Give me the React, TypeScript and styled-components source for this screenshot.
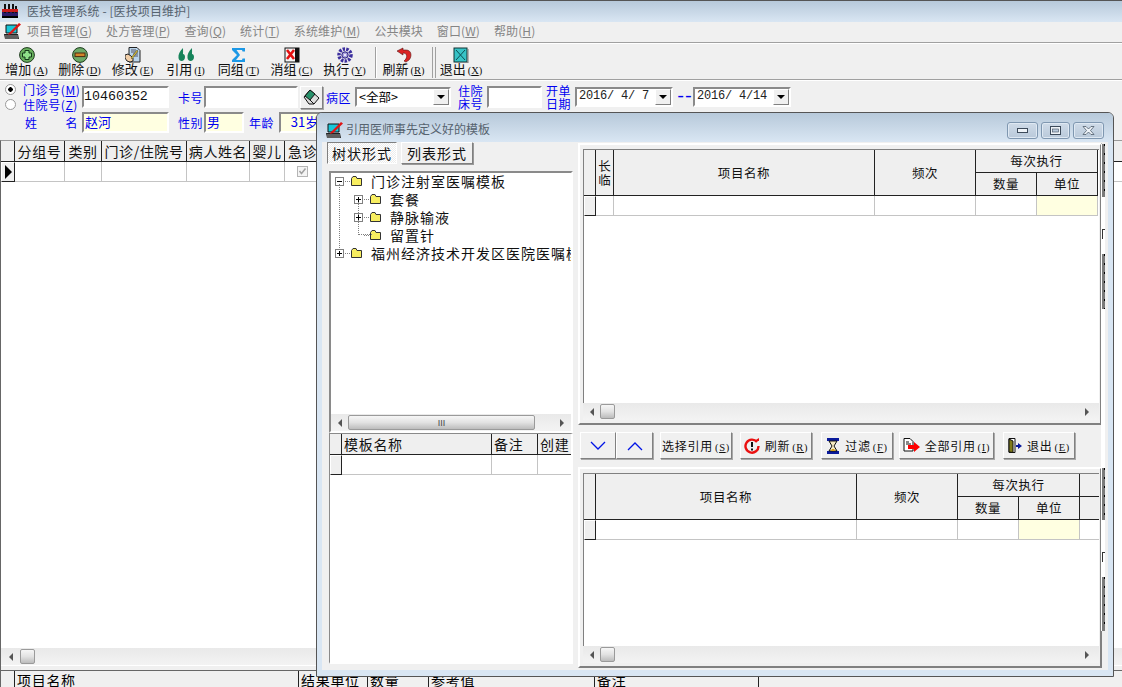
import React from "react";
import styled, { createGlobalStyle, css } from "styled-components";

const CJK = `"Noto Sans CJK SC", "Liberation Sans", sans-serif`;

const Global = createGlobalStyle`
  html, body { margin: 0; padding: 0; background: #f0f0f0; overflow: hidden; }
  * { box-sizing: border-box; }
  svg { flex: none; }
`;

const raised = css`
  border: 1px solid;
  border-color: #fff #808080 #808080 #fff;
  box-shadow: 1px 1px 0 #a8a8a8;
`;
const sunken = css`
  border: 2px solid;
  border-color: #8a8a8a #fff #fff #8a8a8a;
`;

const Page = styled.div`
  position: relative;
  width: 1122px;
  height: 687px;
  overflow: hidden;
  background: #f0f0f0;
  display: flex;
  flex-direction: column;
  font-family: ${CJK};
  color: #000;
`;

const TitleBar = styled.div`
  height: 22px;
  border-top: 1px solid #555;
  background: linear-gradient(#b7c9da, #d9e6f3);
  display: flex;
  align-items: center;
  gap: 9px;
  padding: 0 0 2px 2px;
  font-size: 12px;
  letter-spacing: 0.1px;
  color: #56636f;
`;

const MenuBar = styled.div`
  height: 21px;
  background: #f0f0f0;
  border-bottom: 1px solid #a0a0a0;
  display: flex;
  align-items: center;
  padding: 0 0 3px 4px;
`;
const MenuIconWrap = styled.div`
  width: 23px;
  display: flex;
`;
const MenuList = styled.div`
  display: flex;
  gap: 14px;
`;
const MenuItem = styled.span`
  font-size: 12px;
  color: #858585;
  white-space: nowrap;
  letter-spacing: 0.1px;
  u { text-decoration: underline; }
`;

const Toolbar = styled.div`
  height: 37px;
  border-top: 1px solid #fff;
  border-bottom: 1px solid #a0a0a0;
  box-shadow: 0 1px 0 #fff;
  display: flex;
  align-items: flex-start;
  padding-top: 3px;
`;
const ToolButton = styled.div<{ $w?: number }>`
  width: ${(p) => p.$w ?? 53}px;
  display: flex;
  flex-direction: column;
  align-items: center;
  height: 32px;
  white-space: nowrap;
`;
const ToolLabel = styled.span`
  font-size: 13px;
  line-height: 14px;
  margin-top: -1px;
  color: #111;
`;
const Accel = styled.span`
  font-family: "Liberation Serif", serif;
  font-size: 10.5px;
  margin-left: 2px;
  u { text-decoration: underline; }
`;
const ToolSep = styled.div<{ $double?: boolean; $ml: number }>`
  width: ${(p) => (p.$double ? 4 : 2)}px;
  height: 31px;
  margin-left: ${(p) => p.$ml}px;
  border-left: 1px solid #a0a0a0;
  border-right: 1px solid ${(p) => (p.$double ? "#a0a0a0" : "#fff")};
`;

const Form = styled.div`
  height: 60px;
  display: flex;
  flex-direction: column;
  padding-top: 2px;
`;
const FormRow = styled.div<{ $h: number }>`
  height: ${(p) => p.$h}px;
  display: flex;
  align-items: center;
`;
const RadioStack = styled.div`
  width: 82px;
  padding: 0 0 1px 5px;
  display: flex;
  flex-direction: column;
`;
const RadioLine = styled.div`
  height: 15px;
  display: flex;
  align-items: center;
  gap: 7px;
`;
const Radio = styled.span<{ $on?: boolean }>`
  width: 11px;
  height: 11px;
  border-radius: 50%;
  border: 1px solid #9a9a9a;
  background: ${(p) => (p.$on ? "radial-gradient(circle, #000 0 2px, #fff 2.5px)" : "#fff")};
`;
const BlueText = styled.span<{ $w?: number; $ml?: number; $stack?: boolean }>`
  color: #0000f0;
  font-size: 12px;
  letter-spacing: 0.6px;
  white-space: nowrap;
  flex: none;
  ${(p) => p.$w && `width: ${p.$w}px;`}
  ${(p) => p.$ml && `margin-left: ${p.$ml}px;`}
  ${(p) => p.$stack && "line-height: 13px; white-space: normal;"}
`;
const NameLabel = styled(BlueText)`
  display: flex;
  justify-content: space-between;
  width: 53px;
  margin-left: 25px;
  margin-right: 4px;
`;
const TextBox = styled.div<{ $w: number; $ml?: number; $h?: number; $tint?: boolean }>`
  ${sunken}
  flex: none;
  width: ${(p) => p.$w}px;
  height: ${(p) => p.$h ?? 22}px;
  margin-left: ${(p) => p.$ml ?? 0}px;
  background: ${(p) => (p.$tint ? "#ffffe1" : "#fff")};
  color: #0000f0;
  font-size: 13px;
  line-height: 16px;
  padding-left: 1px;
  overflow: hidden;
  white-space: nowrap;
`;
const NumberBox = styled(TextBox)`
  color: #111;
  font-family: "Liberation Mono", monospace;
  font-size: 13.3px;
  line-height: 18px;
  padding-left: 0;
`;
const IconButton = styled.div`
  ${raised}
  width: 23px;
  height: 23px;
  margin-left: 2px;
  flex: none;
  display: flex;
  align-items: center;
  justify-content: center;
`;
const Combo = styled.div<{ $w: number; $ml: number; $mono?: boolean }>`
  ${sunken}
  flex: none;
  width: ${(p) => p.$w}px;
  height: 20px;
  margin-left: ${(p) => p.$ml}px;
  background: #fff;
  display: flex;
  justify-content: space-between;
  font-size: 12.5px;
  line-height: 15px;
  white-space: pre;
  padding-left: 2px;
  ${(p) => p.$mono && `font-family: "Liberation Mono", monospace; font-size: 12px; letter-spacing: -0.2px; color: #222;`}
`;
const ComboButton = styled.div`
  ${raised}
  box-shadow: none;
  width: 16px;
  height: 16px;
  background: #f0f0f0;
  display: flex;
  align-items: center;
  justify-content: center;
  &::after {
    content: "";
    border-left: 4px solid transparent;
    border-right: 4px solid transparent;
    border-top: 4px solid #000;
  }
`;
const Dash = styled.span`
  color: #0000f0;
  font-family: "Liberation Mono", monospace;
  font-size: 18px;
  line-height: 15px;
  width: 20px;
  text-align: center;
  flex: none;
  letter-spacing: -3px;
`;

const MainArea = styled.div`
  flex: none;
  height: 531px;
  display: flex;
  flex-direction: column;
  border-left: 1px solid #666;
  border-top: 1px solid #9a9a9a;
`;
const GridHost = styled.div`
  flex: 1;
  min-height: 0;
  overflow: hidden;
  background: #fff;
`;
const Grid = styled.div<{ $cols: string; $rows: string }>`
  display: grid;
  grid-template-columns: ${(p) => p.$cols};
  grid-template-rows: ${(p) => p.$rows};
  width: max-content;
`;
const Head = styled.div<{ $col?: string; $row?: string; $size?: number; $left?: boolean }>`
  background: #efefef;
  border-right: 1px solid #222;
  border-bottom: 1px solid #222;
  display: flex;
  align-items: center;
  justify-content: ${(p) => (p.$left ? "flex-start" : "center")};
  padding-left: ${(p) => (p.$left ? 2 : 0)}px;
  font-size: ${(p) => p.$size ?? 13}px;
  letter-spacing: ${(p) => (p.$left ? 0.7 : 0.6)}px;
  line-height: 14px;
  white-space: nowrap;
  overflow: hidden;
  color: #111;
  ${(p) => p.$col && `grid-column: ${p.$col};`}
  ${(p) => p.$row && `grid-row: ${p.$row};`}
`;
const CornerHead = styled(Head)`
  border-right-color: #222;
`;
const Indicator = styled.div`
  background: #efefef;
  border-right: 1px solid #222;
  border-bottom: 1px solid #222;
  border-top: 1px solid #fff;
  border-left: 1px solid #fff;
  display: flex;
  align-items: center;
  justify-content: center;
  &[data-current="true"]::after {
    content: "";
    border-top: 7px solid transparent;
    border-bottom: 7px solid transparent;
    border-left: 7px solid #000;
  }
`;
const Cell = styled.div<{ $tint?: boolean }>`
  background: ${(p) => (p.$tint ? "#ffffe1" : "#fff")};
  border-right: 1px solid #c4c4c4;
  border-bottom: 1px solid #c4c4c4;
  display: flex;
  align-items: center;
  justify-content: center;
`;
const VertLabel = styled.span`
  font-size: 12.5px;
  line-height: 14px;
  letter-spacing: 0;
  width: 13px;
  white-space: normal;
  text-align: center;
`;

const ScrollTrack = styled.div`
  flex: none;
  height: 17px;
  background: linear-gradient(#e9e9e9, #f3f3f3);
  display: flex;
  align-items: center;
`;
const ArrowCell = styled.div<{ $dir: "l" | "r"; $w: number }>`
  width: ${(p) => p.$w}px;
  flex: none;
  display: flex;
  justify-content: center;
  &::after {
    content: "";
    border-top: 4px solid transparent;
    border-bottom: 4px solid transparent;
    ${(p) => (p.$dir === "l" ? "border-right: 4px solid #555;" : "border-left: 4px solid #555;")}
  }
`;
const Thumb = styled.div<{ $w: number }>`
  width: ${(p) => p.$w}px;
  flex: none;
  height: 15px;
  border: 1px solid #9a9a9a;
  border-radius: 2px;
  background: linear-gradient(#f6f6f6, #e2e2e2 50%, #bcbcbc);
  display: flex;
  align-items: center;
  justify-content: center;
  font-size: 9px;
  font-family: "Liberation Sans", sans-serif;
  color: #444;
`;
const ScrollSpacer = styled.div`
  flex: 1;
`;

const SplitGap = styled.div`
  flex: none;
  height: 6px;
  background: #f0f0f0;
  border-top: 1px solid #fff;
  border-bottom: 1px solid #666;
`;
const BottomGrid = styled.div`
  flex: 1;
  overflow: hidden;
  display: grid;
  grid-template-columns: 14px 284px 69px 61px 166px 164px;
  width: max-content;
  border-left: 1px solid #666;
`;
const BottomHead = styled.div`
  background: #f0f0f0;
  height: 30px;
  border-right: 1px solid #222;
  font-size: 14px;
  letter-spacing: 0.7px;
  line-height: 16px;
  padding: 1px 0 0 2px;
  white-space: nowrap;
  overflow: hidden;
`;

/* dialog window */
const Dialog = styled.div`
  position: absolute;
  left: 316px;
  top: 112px;
  width: 798px;
  height: 565px;
  border: 1px solid #555;
  border-radius: 6px 6px 0 0;
  background: #d9e6f3;
  display: flex;
  flex-direction: column;
  overflow: hidden;
`;
const DialogTitle = styled.div`
  height: 29px;
  flex: none;
  background: linear-gradient(#b7c9da, #d9e6f3);
  display: flex;
  align-items: flex-end;
  padding: 0 9px 3px 9px;
  font-size: 12px;
  color: #56636f;
`;
const DialogCaption = styled.div`
  display: flex;
  align-items: center;
  gap: 2px;
  flex: 1;
  span { padding-bottom: 2px; }
`;
const WinButtons = styled.div`
  display: flex;
  gap: 3px;
`;
const WinButton = styled.div<{ $w: number }>`
  width: ${(p) => p.$w}px;
  height: 17px;
  border: 1px solid #7f97b0;
  border-radius: 3px;
  background: linear-gradient(#cfdbe8, #b9c9da);
  box-shadow: inset 0 0 0 1px #dfe9f3;
  display: flex;
  align-items: center;
  justify-content: center;
`;
const DialogBody = styled.div`
  height: 528px;
  margin: 0 5px;
  background: #f0f0f0;
  display: flex;
  flex: none;
`;
const LeftPane = styled.div`
  width: 255px;
  flex: none;
  display: flex;
  flex-direction: column;
  padding-left: 5px;
  padding-right: 4px;
`;
const Tabs = styled.div`
  display: flex;
  gap: 4px;
  height: 22px;
  flex: none;
`;
const Tab = styled.div<{ $active?: boolean }>`
  width: ${(p) => (p.$active ? 70 : 72)}px;
  font-size: 14px;
  letter-spacing: 1px;
  display: flex;
  align-items: center;
  justify-content: center;
  border: 1px solid;
  color: #111;
  ${(p) =>
    p.$active
      ? `border-color: #808080 #fff #fff #808080;
         background: repeating-conic-gradient(#fff 0 25%, #ececec 0 50%) 0 0 / 2px 2px;`
      : `border-color: #fff #808080 #808080 #fff; box-shadow: 1px 1px 0 #999; background: #f0f0f0;`}
`;
const TreeBox = styled.div`
  ${sunken}
  margin: 7px 0 0 2px;
  height: 262px;
  flex: none;
  background: #fff;
  display: flex;
  flex-direction: column;
`;
const TreeList = styled.div`
  flex: 1;
  overflow: hidden;
  position: relative;
`;
const TreeRow = styled.div<{ $depth: number }>`
  height: 18px;
  display: flex;
  align-items: center;
  padding: 0 0 2px ${(p) => 4 + p.$depth * 19}px;
  white-space: nowrap;
  font-size: 14px;
  letter-spacing: 1px;
  color: #111;
`;
const Expander = styled.span<{ $open?: boolean; $none?: boolean }>`
  position: relative;
  flex: none;
  width: 9px;
  height: 9px;
  border: 1px solid ${(p) => (p.$none ? "transparent" : "#808080")};
  background: ${(p) =>
    p.$none
      ? "none"
      : `linear-gradient(#000, #000) center / 5px 1px no-repeat${
          p.$open ? "" : ", linear-gradient(#000, #000) center / 1px 5px no-repeat"
        }`};
  &::after {
    content: "";
    position: absolute;
    left: 9px;
    top: 3px;
    width: 5px;
    border-top: 1px dotted #808080;
  }
`;
const TreeIcon = styled.span`
  display: flex;
  margin: 0 9px 0 7px;
`;
const TreeGuide = styled.span<{ $left: number; $top: number; $h: number }>`
  position: absolute;
  left: ${(p) => p.$left}px;
  top: ${(p) => p.$top}px;
  height: ${(p) => p.$h}px;
  border-left: 1px dotted #808080;
`;
const LeafElbow = styled.span`
  position: absolute;
  left: 27px;
  top: 61px;
  width: 14px;
  border-top: 1px dotted #808080;
`;
const TemplateBox = styled.div`
  ${sunken}
  border-left-width: 1px;
  border-top-width: 1px;
  margin: 0 0 6px 2px;
  flex: 1;
  min-height: 0;
  background: #fff;
  overflow: hidden;
`;

const RightPane = styled.div`
  flex: 1;
  min-width: 0;
  display: flex;
  flex-direction: column;
  padding-left: 1px;
`;
const Panel = styled.div<{ $h: number; $mt: number }>`
  flex: none;
  width: 524px;
  height: ${(p) => p.$h}px;
  margin-top: ${(p) => p.$mt}px;
  border: 2px solid;
  border-color: #fff #808080 #808080 #fff;
  padding: 4px 1px 3px 3px;
  display: flex;
  flex-direction: column;
`;
const PanelGrid = styled(GridHost)`
  border-top: 1px solid #808080;
  border-left: 1px solid #808080;
`;
const ActionRow = styled.div`
  flex: none;
  height: 27px;
  margin-top: 7px;
  padding-left: 2px;
  display: flex;
`;
const ActionButton = styled.div<{ $w: number; $ml?: number }>`
  ${raised}
  width: ${(p) => p.$w}px;
  margin-left: ${(p) => p.$ml ?? 0}px;
  flex: none;
  display: flex;
  align-items: center;
  justify-content: center;
  gap: 5px;
  font-size: 12px;
  letter-spacing: 0.7px;
  white-space: nowrap;
  color: #111;
`;

const RepaintStrip = styled.div`
  position: absolute;
  left: 784px;
  top: 31px;
  width: 5px;
  display: flex;
  flex-direction: column;
`;
const StripPart = styled.div<{ $h: number; $dark?: boolean }>`
  height: ${(p) => p.$h}px;
  position: relative;
  ${(p) =>
    p.$dark
      ? `background:
           repeating-linear-gradient(#000 0 2px, transparent 2px 9px) 3px 0 / 1px 100% no-repeat,
           linear-gradient(90deg, #fff 0 1px, #7a7a7a 1px 4px, #f0f0f0 4px);`
      : `background: linear-gradient(90deg, #fff 0 4px, #f0f0f0 4px);`}
`;
const StripGlyph = styled.span`
  position: absolute;
  left: 1px;
  top: 32px;
  width: 3px;
  height: 10px;
  border-left: 1px solid #333;
  border-top: 1px solid #333;
`;

/* ------- icons ------- */
const AppIcon = () => (
  <svg width="18" height="18" viewBox="0 0 18 18">
    <path d="M2 3h11v8H2z" fill="#18c6d8" stroke="#111" />
    <path d="M0 12h14l1 5H1z" fill="#222" />
    <path d="M1 14h13M1 16h13" stroke="#999" />
    <path d="M5 11 15 1l2 1.500L7 12l-3 1z" fill="#e01414" />
  </svg>
);
const SystemIcon = () => (
  <svg width="16" height="15" viewBox="0 0 16 15">
    <rect x="0" y="9" width="16" height="5" fill="#2a1a6a" />
    <path d="M3 1v9M7 1v9M11 1v9M14 3v7" stroke="#111" strokeWidth="2" />
    <rect x="0" y="6" width="16" height="3" fill="#c81a1a" />
    <path d="M0 14h16" stroke="#000" strokeWidth="2" />
  </svg>
);
const PlusIcon = () => (
  <svg width="16" height="16" viewBox="0 0 16 16">
    <circle cx="8" cy="8" r="7.4" fill="#69b05e" stroke="#1d3a1d" />
    <path d="M6 3.500h4V6h2.500v4H10v2.500H6V10H3.500V6H6z" fill="#8fe08a" stroke="#14381a" />
  </svg>
);
const MinusIcon = () => (
  <svg width="16" height="16" viewBox="0 0 16 16">
    <circle cx="8" cy="8" r="7.4" fill="#6dab68" stroke="#1d3a1d" />
    <rect x="3" y="6" width="10" height="3.600" fill="#d2842a" stroke="#4a2c10" />
  </svg>
);
const EditIcon = () => (
  <svg width="16" height="16" viewBox="0 0 16 16">
    <path d="M4 .5h8l3 3V15H4z" fill="#b9d4ea" stroke="#222" />
    <path d="M6 3h5M6 5h7M8 7h5M8 9h5" stroke="#556" />
    <path d="M0 8l3-1 3 2 2 2v3l-3 1-3-1-2-3z" fill="#f2cfa8" stroke="#222" />
    <path d="M6 11 12 3l1 1-6 8z" fill="#f2d22a" stroke="#333" strokeWidth=".5" />
  </svg>
);
const QuoteIcon = () => (
  <svg width="16" height="16" viewBox="0 0 16 16">
    <path d="M5 1C2 4 0 7 .5 11c.4 4 6.500 4 6.500-1 0-2-1-3-2-3 0-2 .2-4 0-6z" fill="#16835a" />
    <path d="M14 1c-3 3-5 6-4.500 10 .4 4 6.500 4 6.500-1 0-2-1-3-2-3 0-2 .2-4 0-6z" fill="#16835a" />
  </svg>
);
const SigmaIcon = () => (
  <svg width="15" height="16" viewBox="0 0 15 16">
    <path d="M1 1h13v3.500h-2.500L11 3H5.500L9 8l-4 5h6l.5-1.500H14V15H1v-2l5-5L1 3z" fill="#1c98e6" />
  </svg>
);
const CancelIcon = () => (
  <svg width="16" height="16" viewBox="0 0 16 16">
    <rect x="1" y="1" width="14" height="14" fill="#f4f4f4" stroke="#111" />
    <rect x="11" y="1" width="4" height="14" fill="#111" />
    <path d="M3 3l7 9M10 3l-7 9" stroke="#e41010" strokeWidth="2.600" />
  </svg>
);
const GearIcon = () => (
  <svg width="16" height="16" viewBox="0 0 16 16">
    <circle cx="8" cy="8" r="6" fill="none" stroke="#3c2f9e" strokeWidth="3.500" strokeDasharray="2.400 1.200" />
    <circle cx="8" cy="8" r="3.200" fill="#a9a2de" stroke="#251c78" />
    <circle cx="8" cy="8" r="1" fill="#fff" />
  </svg>
);
const RedoIcon = () => (
  <svg width="16" height="16" viewBox="0 0 16 16">
    <path d="M1 4l6-3v2h3c6 0 6 7 3 10l-3 2-2-1c3-2 4-7 0-8H7v2z" fill="#dc2424" stroke="#5a1010" strokeWidth=".6" />
  </svg>
);
const ExitIcon = () => (
  <svg width="16" height="16" viewBox="0 0 16 16">
    <rect x="1" y="1" width="13" height="14" fill="#37c3c6" stroke="#133" />
    <path d="M3 3l9 10M12 3L3 13" stroke="#0b4f55" />
    <path d="M15 2v14H2" fill="none" stroke="#777" />
  </svg>
);
const EraserIcon = () => (
  <svg width="19" height="18" viewBox="0 0 19 18">
    <path d="M2 9 8 2l9 8-5 6H7z" fill="#ddd" stroke="#111" />
    <path d="M3 8 8 2l5 4-5 6z" fill="#27906a" stroke="#111" />
    <path d="M8 12l4 4" stroke="#111" />
  </svg>
);
const FolderIcon = () => (
  <svg width="11" height="10" viewBox="0 0 11 10">
    <path d="M.5 2.500 2 .5h3l1 2h4.500v7H.5z" fill="#f8ee60" stroke="#333" />
  </svg>
);
const ChevronDown = () => (
  <svg width="16" height="10" viewBox="0 0 16 10">
    <path d="M1 1l7 7 7-7" fill="none" stroke="#0014e6" strokeWidth="1.300" />
  </svg>
);
const ChevronUp = () => (
  <svg width="16" height="10" viewBox="0 0 16 10">
    <path d="M1 9l7-7 7 7" fill="none" stroke="#0014e6" strokeWidth="1.300" />
  </svg>
);
const RefreshBadge = () => (
  <svg width="16" height="16" viewBox="0 0 16 16">
    <path d="M13 4a6.500 6.500 0 1 0 1.500 4" fill="none" stroke="#ea1010" strokeWidth="2.400" />
    <path d="M10 3h5V0z" fill="#ea1010" />
    <path d="M8 4v5" stroke="#111" strokeWidth="2" />
    <rect x="7" y="10.500" width="2" height="2" fill="#111" />
  </svg>
);
const HourglassIcon = () => (
  <svg width="14" height="16" viewBox="0 0 14 16">
    <path d="M1 0h12v3H1zM1 13h12v3H1z" fill="#0a1a9c" />
    <path d="M3 3h8L8 8l3 5H3l3-5z" fill="#f4e9c0" stroke="#111" />
    <path d="M6 11h2l1.500 2h-5z" fill="#d4a017" />
  </svg>
);
const SendAllIcon = () => (
  <svg width="17" height="15" viewBox="0 0 17 15">
    <path d="M1 .5h6l3 3V13H1z" fill="#fff" stroke="#111" />
    <path d="M3 4h3M3 6h5" stroke="#111" />
    <path d="M5 7h6V4l6 5-6 5v-3H5z" fill="#f00" />
  </svg>
);
const DoorIcon = () => (
  <svg width="14" height="15" viewBox="0 0 14 15">
    <path d="M1 .5h6v14H1z" fill="#fff" stroke="#111" />
    <path d="M1 1l4 2v11.500L1 14z" fill="#7f7a18" stroke="#111" />
    <path d="M8 7h2V5l4 3-4 3V9H8z" fill="#0a1a9c" />
  </svg>
);
const CheckIcon = () => (
  <svg width="11" height="11" viewBox="0 0 11 11">
    <rect x=".5" y=".5" width="10" height="10" fill="#f4f4f4" stroke="#b5b5b5" />
    <path d="M2.500 5l2 2.500 4-5" fill="none" stroke="#a0a0a0" strokeWidth="1.500" />
  </svg>
);

const Key = ({ k }: { k: string }) => (
  <Accel>
    (<u>{k}</u>)
  </Accel>
);

const tools: { label: string; k: string; icon: React.ReactNode }[] = [
  { label: "增加", k: "A", icon: <PlusIcon /> },
  { label: "删除", k: "D", icon: <MinusIcon /> },
  { label: "修改", k: "E", icon: <EditIcon /> },
  { label: "引用", k: "I", icon: <QuoteIcon /> },
  { label: "同组", k: "T", icon: <SigmaIcon /> },
  { label: "消组", k: "C", icon: <CancelIcon /> },
  { label: "执行", k: "Y", icon: <GearIcon /> },
];

const menus: [string, string?][] = [
  ["项目管理", "G"],
  ["处方管理", "P"],
  ["查询", "Q"],
  ["统计", "T"],
  ["系统维护", "M"],
  ["公共模块"],
  ["窗口", "W"],
  ["帮助", "H"],
];

const mainHeads = ["分组号", "类别", "门诊/住院号", "病人姓名", "婴儿", "急诊", "", "清单"];

const RightScroll = () => (
  <ScrollTrack>
    <ArrowCell $dir="l" $w={17} />
    <Thumb $w={15} />
    <ScrollSpacer />
    <ArrowCell $dir="r" $w={24} />
  </ScrollTrack>
);

export default function App() {
  return (
    <Page>
      <Global />
      <TitleBar>
        <SystemIcon />
        <span>医技管理系统 - [医技项目维护]</span>
      </TitleBar>
      <MenuBar>
        <MenuIconWrap>
          <AppIcon />
        </MenuIconWrap>
        <MenuList>
          {menus.map(([t, k]) => (
            <MenuItem key={t}>
              {t}
              {k && (
                <>
                  (<u>{k}</u>)
                </>
              )}
            </MenuItem>
          ))}
        </MenuList>
      </MenuBar>
      <Toolbar>
        {tools.map((t) => (
          <ToolButton key={t.label}>
            {t.icon}
            <ToolLabel>
              {t.label}
              <Key k={t.k} />
            </ToolLabel>
          </ToolButton>
        ))}
        <ToolSep $ml={4} />
        <ToolButton>
          <RedoIcon />
          <ToolLabel>
            刷新
            <Key k="R" />
          </ToolLabel>
        </ToolButton>
        <ToolSep $ml={2} $double />
        <ToolButton $w={50}>
          <ExitIcon />
          <ToolLabel>
            退出
            <Key k="X" />
          </ToolLabel>
        </ToolButton>
      </Toolbar>
      <Form>
        <FormRow $h={30}>
          <RadioStack>
            <RadioLine>
              <Radio $on />
              <BlueText>
                门诊号(<u>M</u>)
              </BlueText>
            </RadioLine>
            <RadioLine>
              <Radio />
              <BlueText>
                住院号(<u>Z</u>)
              </BlueText>
            </RadioLine>
          </RadioStack>
          <NumberBox $w={87}>10460352</NumberBox>
          <BlueText $w={26} $ml={9}>
            卡号
          </BlueText>
          <TextBox $w={94} />
          <IconButton>
            <EraserIcon />
          </IconButton>
          <BlueText $w={29} $ml={3}>
            病区
          </BlueText>
          <Combo $w={96} $ml={0}>
            &lt;全部&gt;
            <ComboButton />
          </Combo>
          <BlueText $w={26} $ml={7} $stack>
            住院床号
          </BlueText>
          <TextBox $w={55} $ml={3} />
          <BlueText $w={26} $ml={4} $stack>
            开单日期
          </BlueText>
          <Combo $w={98} $ml={3} $mono>
            {"2016/ 4/ 7"}
            <ComboButton />
          </Combo>
          <Dash>--</Dash>
          <Combo $w={98} $ml={0} $mono>
            {"2016/ 4/14"}
            <ComboButton />
          </Combo>
        </FormRow>
        <FormRow $h={21}>
          <NameLabel>
            <span>姓</span>
            <span>名</span>
          </NameLabel>
          <TextBox $w={87} $h={21} $tint>
            赵河
          </TextBox>
          <BlueText $w={26} $ml={9}>
            性别
          </BlueText>
          <TextBox $w={40} $h={21} $tint>
            男
          </TextBox>
          <BlueText $w={30} $ml={5}>
            年龄
          </BlueText>
          <TextBox $w={60} $h={21} $tint>
            &nbsp;&nbsp;&nbsp;31岁
          </TextBox>
        </FormRow>
      </Form>
      <MainArea>
        <GridHost>
          <Grid $cols="14px 50px 37px 85px 63px 35px 36px 792px 60px" $rows="21px 20px">
            <CornerHead />
            {mainHeads.map((h, i) => (
              <Head key={i} $size={14}>
                {h}
              </Head>
            ))}
            <Indicator data-current="true" />
            <Cell />
            <Cell />
            <Cell />
            <Cell />
            <Cell />
            <Cell>
              <CheckIcon />
            </Cell>
            <Cell />
            <Cell />
          </Grid>
        </GridHost>
        <ScrollTrack>
          <ArrowCell $dir="l" $w={19} />
          <Thumb $w={15} />
          <ScrollSpacer />
        </ScrollTrack>
        <SplitGap />
      </MainArea>
      <BottomGrid>
        <BottomHead />
        <BottomHead>项目名称</BottomHead>
        <BottomHead>结果单位</BottomHead>
        <BottomHead>数量</BottomHead>
        <BottomHead>参考值</BottomHead>
        <BottomHead>备注</BottomHead>
      </BottomGrid>

      <Dialog>
        <DialogTitle>
          <DialogCaption>
            <AppIcon />
            <span>引用医师事先定义好的模板</span>
          </DialogCaption>
          <WinButtons>
            <WinButton $w={31}>
              <svg width="11" height="5" viewBox="0 0 11 5">
                <rect x=".5" y=".5" width="10" height="4" fill="#eef3f8" stroke="#3c4a5a" />
              </svg>
            </WinButton>
            <WinButton $w={29}>
              <svg width="11" height="9" viewBox="0 0 11 9">
                <rect x=".5" y=".5" width="10" height="8" fill="#eef3f8" stroke="#3c4a5a" />
                <rect x="2.500" y="3" width="6" height="3" fill="#b9c9da" stroke="#3c4a5a" strokeWidth=".6" />
              </svg>
            </WinButton>
            <WinButton $w={31}>
              <svg width="13" height="9" viewBox="0 0 13 9">
                <path d="M1 .5h3l2.500 2.500L9 .5h3L8.500 4.500 12 8.500H9L6.500 6 4 8.500H1l3.500-4z" fill="#eef3f8" stroke="#3c4a5a" strokeWidth=".7" />
              </svg>
            </WinButton>
          </WinButtons>
        </DialogTitle>
        <DialogBody>
          <LeftPane>
            <Tabs>
              <Tab $active>树状形式</Tab>
              <Tab>列表形式</Tab>
            </Tabs>
            <TreeBox>
              <TreeList>
                <TreeGuide $left={8} $top={11} $h={72} />
                <TreeGuide $left={27} $top={28} $h={34} />
                <LeafElbow />
                <TreeRow $depth={0}>
                  <Expander $open />
                  <TreeIcon>
                    <FolderIcon />
                  </TreeIcon>
                  门诊注射室医嘱模板
                </TreeRow>
                <TreeRow $depth={1}>
                  <Expander />
                  <TreeIcon>
                    <FolderIcon />
                  </TreeIcon>
                  套餐
                </TreeRow>
                <TreeRow $depth={1}>
                  <Expander />
                  <TreeIcon>
                    <FolderIcon />
                  </TreeIcon>
                  静脉输液
                </TreeRow>
                <TreeRow $depth={1}>
                  <Expander $none />
                  <TreeIcon>
                    <FolderIcon />
                  </TreeIcon>
                  留置针
                </TreeRow>
                <TreeRow $depth={0}>
                  <Expander />
                  <TreeIcon>
                    <FolderIcon />
                  </TreeIcon>
                  福州经济技术开发区医院医嘱模板
                </TreeRow>
              </TreeList>
              <ScrollTrack>
                <ArrowCell $dir="l" $w={17} />
                <Thumb $w={187}>III</Thumb>
                <ScrollSpacer />
                <ArrowCell $dir="r" $w={18} />
              </ScrollTrack>
            </TreeBox>
            <TemplateBox>
              <Grid $cols="12px 150px 46px 35px" $rows="21px 20px">
                <CornerHead />
                <Head $left $size={14}>
                  模板名称
                </Head>
                <Head $left $size={14}>
                  备注
                </Head>
                <Head $left $size={14}>
                  创建
                </Head>
                <Indicator />
                <Cell />
                <Cell />
                <Cell />
              </Grid>
            </TemplateBox>
          </LeftPane>
          <RightPane>
            <Panel $h={282} $mt={1}>
              <PanelGrid>
                <Grid $cols="12px 18px 261px 101px 61px 61px" $rows="23px 23px 20px">
                  <CornerHead $row="1 / span 2" />
                  <Head $row="1 / span 2" $col="2">
                    <VertLabel>长临</VertLabel>
                  </Head>
                  <Head $row="1 / span 2" $col="3" $size={12.5}>
                    项目名称
                  </Head>
                  <Head $row="1 / span 2" $col="4" $size={12.5}>
                    频次
                  </Head>
                  <Head $col="5 / span 2" $size={12.5}>
                    每次执行
                  </Head>
                  <Head $col="5" $row="2" $size={12.5}>
                    数量
                  </Head>
                  <Head $col="6" $row="2" $size={12.5}>
                    单位
                  </Head>
                  <Indicator />
                  <Cell />
                  <Cell />
                  <Cell />
                  <Cell />
                  <Cell $tint />
                </Grid>
              </PanelGrid>
              <RightScroll />
            </Panel>
            <ActionRow>
              <ActionButton $w={36}>
                <ChevronDown />
              </ActionButton>
              <ActionButton $w={37}>
                <ChevronUp />
              </ActionButton>
              <ActionButton $w={72} $ml={7}>
                <span>
                  选择引用
                  <Key k="S" />
                </span>
              </ActionButton>
              <ActionButton $w={72} $ml={8}>
                <RefreshBadge />
                <span>
                  刷新
                  <Key k="R" />
                </span>
              </ActionButton>
              <ActionButton $w={72} $ml={9}>
                <HourglassIcon />
                <span>
                  过滤
                  <Key k="F" />
                </span>
              </ActionButton>
              <ActionButton $w={95} $ml={6}>
                <SendAllIcon />
                <span>
                  全部引用
                  <Key k="I" />
                </span>
              </ActionButton>
              <ActionButton $w={72} $ml={9}>
                <DoorIcon />
                <span>
                  退出
                  <Key k="E" />
                </span>
              </ActionButton>
            </ActionRow>
            <Panel $h={201} $mt={8}>
              <PanelGrid>
                <Grid $cols="12px 261px 101px 61px 61px 24px" $rows="23px 23px 20px">
                  <CornerHead $row="1 / span 2" />
                  <Head $row="1 / span 2" $col="2" $size={12.5}>
                    项目名称
                  </Head>
                  <Head $row="1 / span 2" $col="3" $size={12.5}>
                    频次
                  </Head>
                  <Head $col="4 / span 2" $size={12.5}>
                    每次执行
                  </Head>
                  <Head $col="6" $row="1" />
                  <Head $col="4" $row="2" $size={12.5}>
                    数量
                  </Head>
                  <Head $col="5" $row="2" $size={12.5}>
                    单位
                  </Head>
                  <Head $col="6" $row="2" />
                  <Indicator />
                  <Cell />
                  <Cell />
                  <Cell />
                  <Cell $tint />
                  <Cell />
                </Grid>
              </PanelGrid>
              <RightScroll />
            </Panel>
          </RightPane>
        </DialogBody>
        <RepaintStrip>
          <StripPart $h={53} $dark />
          <StripPart $h={57}>
            <StripGlyph />
          </StripPart>
          <StripPart $h={55} $dark />
          <StripPart $h={159} />
          <StripPart $h={52} $dark />
          <StripPart $h={57}>
            <StripGlyph />
          </StripPart>
          <StripPart $h={54} $dark />
        </RepaintStrip>
      </Dialog>
    </Page>
  );
}
